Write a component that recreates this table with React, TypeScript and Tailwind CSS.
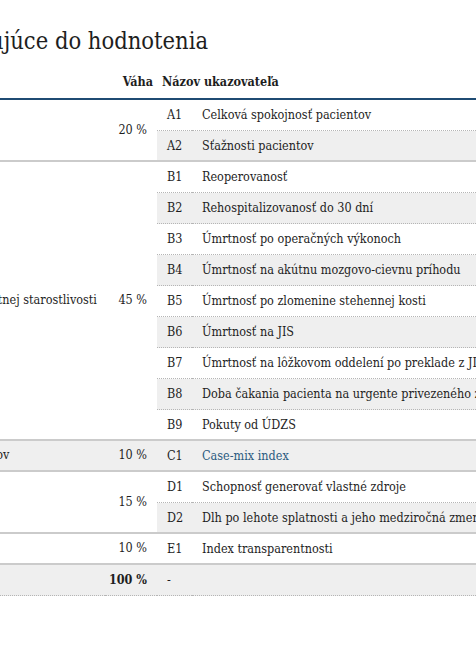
import React from 'react';

interface Indicator {
    code: string;
    name: string;
    link?: boolean;
}

interface Group {
    name: string;
    weight: string;
    items: Indicator[];
}

const groups: Group[] = [
    {
        name: 'Spokojnosť pacientov',
        weight: '20 %',
        items: [
            { code: 'A1', name: 'Celková spokojnosť pacientov' },
            { code: 'A2', name: 'Sťažnosti pacientov' },
        ],
    },
    {
        name: 'Kvalita a bezpečnosť zdravotnej starostlivosti',
        weight: '45 %',
        items: [
            { code: 'B1', name: 'Reoperovanosť' },
            { code: 'B2', name: 'Rehospitalizovanosť do 30 dní' },
            { code: 'B3', name: 'Úmrtnosť po operačných výkonoch' },
            { code: 'B4', name: 'Úmrtnosť na akútnu mozgovo-cievnu príhodu' },
            { code: 'B5', name: 'Úmrtnosť po zlomenine stehennej kosti' },
            { code: 'B6', name: 'Úmrtnosť na JIS' },
            { code: 'B7', name: 'Úmrtnosť na lôžkovom oddelení po preklade z JIS' },
            { code: 'B8', name: 'Doba čakania pacienta na urgente privezeného záchrankou' },
            { code: 'B9', name: 'Pokuty od ÚDZS' },
        ],
    },
    {
        name: 'Efektívnosť a liečba pacientov',
        weight: '10 %',
        items: [{ code: 'C1', name: 'Case-mix index', link: true }],
    },
    {
        name: 'Finančné zdravie',
        weight: '15 %',
        items: [
            { code: 'D1', name: 'Schopnosť generovať vlastné zdroje' },
            { code: 'D2', name: 'Dlh po lehote splatnosti a jeho medziročná zmena' },
        ],
    },
    {
        name: 'Transparentnosť',
        weight: '10 %',
        items: [{ code: 'E1', name: 'Index transparentnosti' }],
    },
];

const font = 'font-["Roboto_Slab","DejaVu_Serif",serif] font-stretch-condensed';

export default function App() {
    let rowNo = 0;

    const rows: React.ReactNode[] = [];
    groups.forEach(g => {
        g.items.forEach((it, ii) => {
            rowNo += 1;
            const last = ii === g.items.length - 1;
            const stripe = rowNo % 2 === 0 ? 'bg-[#efefef]' : 'bg-white';
            const cellBorder = last
                ? 'border-b-2 border-solid border-[#cbcbcb] leading-[19px]'
                : 'border-b border-dotted border-[#b5b5b5] leading-[20px]';
            rows.push(
                <tr key={it.code} className={stripe}>
                    {ii === 0 && (
                        <>
                            <td
                                rowSpan={g.items.length}
                                className="align-middle pl-[38px] pr-[10px] whitespace-nowrap border-b-2 border-solid border-[#cbcbcb]"
                            >
                                {g.name}
                            </td>
                            <td
                                rowSpan={g.items.length}
                                className="align-middle text-right pr-[10px] whitespace-nowrap border-b-2 border-solid border-[#cbcbcb]"
                            >
                                {g.weight}
                            </td>
                        </>
                    )}
                    <td className={`py-[5px] pl-[10px] ${cellBorder}`}>{it.code}</td>
                    <td className={`py-[5px] pl-[10px] whitespace-nowrap ${cellBorder} ${it.link ? 'text-[#2b5b80]' : ''}`}>
                        {it.name}
                    </td>
                </tr>
            );
        });
    });

    return (
        <div className={`w-[476px] h-[650px] overflow-hidden bg-white text-[#1e1e1e] ${font}`}>
            <div className="ml-[-200px] w-[720px]">
                <h2 className="pt-[27px] mb-[11px] ml-[-7px] text-[23.5px] leading-[28px] font-normal text-[#1e1e1e]">
                    Ukazovatele vstupujúce do hodnotenia
                </h2>

                <table className="table-fixed border-separate border-spacing-0 w-[712px] text-[12.5px]">
                    <colgroup>
                        <col className="w-[305px]" />
                        <col className="w-[52px]" />
                        <col className="w-[35px]" />
                        <col className="w-[320px]" />
                    </colgroup>
                    <thead>
                        <tr className="font-bold text-[#1e1e1e]">
                            <th className="text-left py-[8px] pl-[38px] leading-[16px] border-b-2 border-[#1f4b73]">
                                Skupina ukazovateľov
                            </th>
                            <th className="text-right py-[8px] pr-[4px] leading-[16px] border-b-2 border-[#1f4b73]">
                                Váha
                            </th>
                            <th
                                colSpan={2}
                                className="text-left py-[8px] pl-[5px] leading-[16px] border-b-2 border-[#1f4b73]"
                            >
                                Názov ukazovateľa
                            </th>
                        </tr>
                    </thead>
                    <tbody>
                        {rows}
                        <tr className="bg-[#efefef]">
                            <td className="pl-[38px] font-bold border-b border-dotted border-[#b5b5b5]">Spolu</td>
                            <td className="text-right pr-[10px] font-bold border-b border-dotted border-[#b5b5b5]">100 %</td>
                            <td className="py-[5px] pl-[10px] leading-[20px] border-b border-dotted border-[#b5b5b5]">-</td>
                            <td className="py-[5px] pl-[10px] leading-[20px] border-b border-dotted border-[#b5b5b5]"></td>
                        </tr>
                    </tbody>
                </table>
            </div>
        </div>
    );
}
